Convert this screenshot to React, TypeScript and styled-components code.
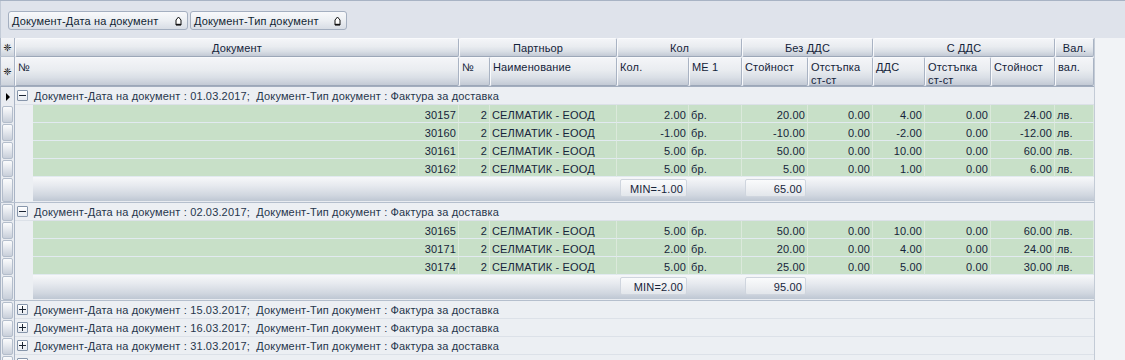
import React from "react";
import styled, { createGlobalStyle } from "styled-components";

const FONT = `"Liberation Sans", Arial, sans-serif`;

const GlobalStyle = createGlobalStyle`
  * { box-sizing: border-box; }
  html, body { margin: 0; padding: 0; background: #f1f3f6; }
  body { font-family: ${FONT}; font-size: 11px; letter-spacing: 0.15px; color: #16243a; }
`;

type Align = "left" | "right";
interface Col { key: string; w: number; align: Align }

const COLS: Col[] = [
  { key: "doc", w: 426, align: "right" },
  { key: "pn", w: 31, align: "right" },
  { key: "name", w: 127, align: "left" },
  { key: "qty", w: 72, align: "right" },
  { key: "me", w: 53, align: "left" },
  { key: "val", w: 66, align: "right" },
  { key: "disc", w: 65, align: "right" },
  { key: "vat", w: 52, align: "right" },
  { key: "disc2", w: 66, align: "right" },
  { key: "total", w: 64, align: "right" },
  { key: "cur", w: 39, align: "left" },
];

const Root = styled.div`
  width: 1125px;
  height: 360px;
  overflow: hidden;
  background: #f1f3f6;
  border-top: 1px solid #a8b3c4;
`;

const GroupPanel = styled.div`
  height: 37px;
  background: #dfe3eb;
  border-left: 1px solid #c3cbd7;
  display: flex;
  align-items: flex-start;
  gap: 2px;
  padding: 10px 0 0 7px;
`;

const GroupButton = styled.div<{ $w: number }>`
  width: ${(p) => p.$w}px;
  height: 19px;
  display: flex;
  align-items: center;
  justify-content: space-between;
  padding: 1px 5px 0 3px;
  border: 1px solid #a4afc0;
  border-radius: 3px;
  background: linear-gradient(180deg, #f8f9fb 0%, #eceff3 50%, #d8dde5 100%);
  color: #111f33;
  white-space: nowrap;
`;

const SortIcon = () => (
  <svg width="7" height="10" viewBox="0 0 7 10">
    <path d="M1 9 V4 L3.5 1 L6 4 V9 Z" fill="#fff" stroke="#111" strokeWidth="1" />
    <path d="M1 8.5 H6" stroke="#111" strokeWidth="1.4" />
  </svg>
);

const Grid = styled.div`
  width: 1095px;
  border-right: 1px solid #c3cbd6;
  background: #eceff3;
`;

const Header = styled.div`
  display: grid;
  grid-template-columns: 15px 444px 31px 127px 72px 53px 66px 65px 52px 66px 64px 39px;
  grid-template-rows: 19px 29px;
  border-bottom: 1px solid #a2adbe;
  background: #e4e8ee;
`;

const HeadCell = styled.div<{ $col: string; $row: number; $center?: boolean }>`
  grid-column: ${(p) => p.$col};
  grid-row: ${(p) => p.$row};
  display: flex;
  align-items: ${(p) => (p.$center ? "center" : "flex-start")};
  justify-content: ${(p) => (p.$center ? "center" : "flex-start")};
  padding: ${(p) => (p.$center ? "1px 0 0 0" : "3px 2px 0 2px")};
  line-height: 13px;
  overflow: hidden;
  color: #14233a;
  border: 1px solid;
  border-color: #f9fafc #a9b3c3 #9ca7b8 #f9fafc;
  border-radius: 2px;
  background: linear-gradient(180deg, #f4f5f8 0%, #e9ecf0 45%, #dadfe6 72%, #c3cad5 100%);
`;

const StarCell = styled.div<{ $row: number }>`
  grid-column: 1;
  grid-row: ${(p) => p.$row};
  display: flex;
  align-items: center;
  justify-content: center;
  border-left: 1px solid #a9b4c5;
  border-right: 1px solid #a9b4c5;
  border-bottom: 1px solid #b9c2cf;
  background: linear-gradient(180deg, #f4f5f8 0%, #e4e8ed 60%, #cdd3dc 100%);
  font-family: "DejaVu Sans", sans-serif;
  font-size: 10px;
  letter-spacing: 0;
  color: #111;
`;

const Indicator = styled.div`
  flex: 0 0 15px;
  width: 15px;
  align-self: stretch;
  display: flex;
  align-items: center;
  justify-content: center;
  border-left: 1px solid #a9b4c5;
  border-right: 1px solid #a9b4c5;
  background: #e9ecf1;
  padding: 1px 1px 0 1px;
`;

const IndicatorButton = styled.div`
  align-self: stretch;
  flex: 1;
  border: 1px solid #b3bdcb;
  border-radius: 2px;
  background: linear-gradient(180deg, #fbfcfd 0%, #e8ebf0 40%, #c8cfda 100%);
`;

const CurrentMark = styled.span`
  width: 0;
  height: 0;
  border-left: 4px solid #000;
  border-top: 4px solid transparent;
  border-bottom: 4px solid transparent;
  margin-left: 1px;
`;

const GroupRow = styled.div`
  display: flex;
  height: 18px;
  background: #eceff3;
`;

const GroupContent = styled.div`
  flex: 1;
  display: flex;
  align-items: center;
  border-bottom: 1px solid #dce1e8;
  padding-left: 2px;
`;

const ExpandBox = styled.span`
  width: 11px;
  height: 11px;
  display: flex;
  align-items: center;
  justify-content: center;
  border: 1px solid #8796ab;
  border-radius: 1px;
  background: linear-gradient(180deg, #ffffff 0%, #e6eaf0 100%);
`;

const GroupLabel = styled.span`
  margin-left: 6px;
  padding-top: 2px;
  white-space: pre;
  color: #26364c;
  line-height: 17px;
`;

const DataRow = styled.div`
  display: flex;
  height: 18px;
`;

const Indent = styled.div`
  flex: 0 0 18px;
  background: #eceff3;
`;

const Cell = styled.div<{ $w: number; $align: Align }>`
  flex: 0 0 ${(p) => p.$w}px;
  width: ${(p) => p.$w}px;
  background: #c8e0c8;
  border-right: 1px solid #dbe9db;
  border-bottom: 1px solid #e2eaf0;
  padding: 1px 2px 0 2px;
  text-align: ${(p) => p.$align};
  line-height: 18px;
  white-space: nowrap;
  overflow: hidden;
  color: #16243a;
`;

const SummaryRow = styled.div`
  display: flex;
  height: 26px;
  border-bottom: 1px solid #b5bfcd;
`;

const SummaryBar = styled.div`
  flex: 1;
  display: flex;
  background: linear-gradient(180deg, #f7f8fa 0%, #e7eaef 35%, #d1d7e0 75%, #bec7d3 100%);
  border-bottom: 1px solid #e9ecf1;
`;

const SummarySlot = styled.div<{ $w: number }>`
  flex: 0 0 ${(p) => p.$w}px;
  padding: 2px 2px 0 3px;
`;

const SummaryBox = styled.div`
  height: 18px;
  border: 1px solid #cfd5de;
  border-radius: 2px;
  background: linear-gradient(180deg, #fafbfc 0%, #eef0f3 55%, #e2e6eb 100%);
  text-align: right;
  padding: 1px 3px 0 0;
  line-height: 17px;
  color: #16243a;
`;

const Minus = () => (
  <svg width="7" height="7" viewBox="0 0 7 7">
    <path d="M0 3.5 H7" stroke="#1b2533" strokeWidth="1" />
  </svg>
);
const Plus = () => (
  <svg width="7" height="7" viewBox="0 0 7 7">
    <path d="M0 3.5 H7 M3.5 0 V7" stroke="#1b2533" strokeWidth="1" />
  </svg>
);

type Row = string[];
interface Group {
  id: string;
  date?: string;
  expanded: boolean;
  current?: boolean;
  rows: Row[];
  min?: string;
  sum?: string;
}

const mk = (n: string, q: string, v: string, vat: string, t: string): Row => [
  n, "2", "СЕЛМАТИК - ЕООД", q, "бр.", v, "0.00", vat, "0.00", t, "лв.",
];

const GROUPS: Group[] = [
  {
    id: "g1",
    date: "01.03.2017",
    expanded: true,
    current: true,
    rows: [
      mk("30157", "2.00", "20.00", "4.00", "24.00"),
      mk("30160", "-1.00", "-10.00", "-2.00", "-12.00"),
      mk("30161", "5.00", "50.00", "10.00", "60.00"),
      mk("30162", "5.00", "5.00", "1.00", "6.00"),
    ],
    min: "MIN=-1.00",
    sum: "65.00",
  },
  {
    id: "g2",
    date: "02.03.2017",
    expanded: true,
    rows: [
      mk("30165", "5.00", "50.00", "10.00", "60.00"),
      mk("30171", "2.00", "20.00", "4.00", "24.00"),
      mk("30174", "5.00", "25.00", "5.00", "30.00"),
    ],
    min: "MIN=2.00",
    sum: "95.00",
  },
  { id: "g3", date: "15.03.2017", expanded: false, rows: [] },
  { id: "g4", date: "16.03.2017", expanded: false, rows: [] },
  { id: "g5", date: "31.03.2017", expanded: false, rows: [] },
  { id: "g6", expanded: false, rows: [] },
];

const HEAD1: [string, string][] = [
  ["2 / 3", "Документ"],
  ["3 / 5", "Партньор"],
  ["5 / 7", "Кол"],
  ["7 / 9", "Без ДДС"],
  ["9 / 12", "С ДДС"],
  ["12 / 13", "Вал."],
];
const HEAD2 = ["№", "№", "Наименование", "Кол.", "МЕ 1", "Стойност", "Отстъпка ст-ст", "ДДС", "Отстъпка ст-ст", "Стойност", "вал."];

const GroupHeader: React.FC<{ g: Group }> = ({ g }) => (
  <GroupRow>
    <Indicator>{g.current ? <CurrentMark /> : <IndicatorButton />}</Indicator>
    <GroupContent>
      <ExpandBox>{g.expanded ? <Minus /> : <Plus />}</ExpandBox>
      {g.date && (
        <GroupLabel>{`Документ-Дата на документ : ${g.date};  Документ-Тип документ : Фактура за доставка`}</GroupLabel>
      )}
    </GroupContent>
  </GroupRow>
);

export default function App() {
  return (
    <>
      <GlobalStyle />
      <Root>
        <GroupPanel>
          <GroupButton $w={180}>
            Документ-Дата на документ <SortIcon />
          </GroupButton>
          <GroupButton $w={157}>
            Документ-Тип документ <SortIcon />
          </GroupButton>
        </GroupPanel>
        <Grid>
          <Header>
            <StarCell $row={1}>❈</StarCell>
            {HEAD1.map(([col, t]) => (
              <HeadCell key={t} $col={col} $row={1} $center>
                {t}
              </HeadCell>
            ))}
            <StarCell $row={2}>❈</StarCell>
            {HEAD2.map((t, i) => (
              <HeadCell key={i} $col={`${i + 2} / ${i + 3}`} $row={2}>
                {t}
              </HeadCell>
            ))}
          </Header>
          {GROUPS.map((g) => (
            <React.Fragment key={g.id}>
              <GroupHeader g={g} />
              {g.expanded &&
                g.rows.map((r) => (
                  <DataRow key={r[0]}>
                    <Indicator>
                      <IndicatorButton />
                    </Indicator>
                    <Indent />
                    {COLS.map((c, i) => (
                      <Cell key={c.key} $w={c.w} $align={c.align}>
                        {r[i]}
                      </Cell>
                    ))}
                  </DataRow>
                ))}
              {g.expanded && (
                <SummaryRow>
                  <Indicator>
                    <IndicatorButton />
                  </Indicator>
                  <Indent />
                  <SummaryBar>
                    {COLS.map((c) => (
                      <SummarySlot key={c.key} $w={c.w}>
                        {c.key === "qty" && <SummaryBox>{g.min}</SummaryBox>}
                        {c.key === "val" && <SummaryBox>{g.sum}</SummaryBox>}
                      </SummarySlot>
                    ))}
                  </SummaryBar>
                </SummaryRow>
              )}
            </React.Fragment>
          ))}
        </Grid>
      </Root>
    </>
  );
}
